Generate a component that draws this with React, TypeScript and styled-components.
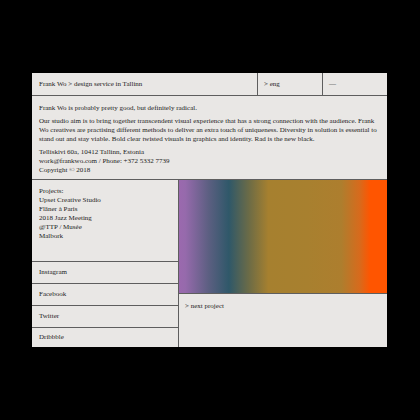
import React from "react";
import styled, { createGlobalStyle } from "styled-components";

const Global = createGlobalStyle`
  html, body { margin: 0; padding: 0; background: #000; }
  body { width: 420px; height: 420px; overflow: hidden; }
`;

const LINE = "#5e5e5e";

const Page = styled.div`
  width: 420px;
  height: 420px;
  background: #000;
  padding: 73px 0 0 32px;
  box-sizing: border-box;
`;

const Panel = styled.div`
  width: 355px;
  height: 274px;
  background: #e9e7e5;
  color: #222;
  font-family: "Liberation Serif", "Times New Roman", serif;
  font-size: 7px;
  line-height: 9px;
  display: flex;
  flex-direction: column;
`;

const Header = styled.div`
  display: grid;
  grid-template-columns: 225px 65px 65px;
  height: 23px;
  box-sizing: border-box;
  border-bottom: 1px solid ${LINE};
`;

const HeaderCell = styled.div<{ $divider?: boolean }>`
  display: flex;
  align-items: center;
  padding-left: ${(p) => (p.$divider ? "6px" : "7px")};
  box-sizing: border-box;
  border-left: ${(p) => (p.$divider ? `1px solid ${LINE}` : "none")};
`;

const Info = styled.div`
  height: 84px;
  box-sizing: border-box;
  border-bottom: 1px solid ${LINE};
  padding: 8px 8px 0 7px;
  display: flex;
  flex-direction: column;
  gap: 4px;
`;

const Para = styled.p`
  margin: 0;
`;

const Bottom = styled.div`
  flex: 1;
  display: grid;
  grid-template-columns: 146px 1fr;
  min-height: 0;
`;

const LeftCol = styled.div`
  display: flex;
  flex-direction: column;
`;

const Projects = styled.div`
  height: 81px;
  box-sizing: border-box;
  padding: 7px 7px 0 7px;
`;

const SocialRow = styled.div<{ $h: number }>`
  height: ${(p) => p.$h}px;
  box-sizing: border-box;
  border-top: 1px solid ${LINE};
  display: flex;
  align-items: center;
  padding-left: 7px;
`;

const RightCol = styled.div`
  display: flex;
  flex-direction: column;
  border-left: 1px solid ${LINE};
`;

const Gradient = styled.div`
  height: 113px;
  background: linear-gradient(
    90deg,
    #9b69ae 0%,
    #966aac 3%,
    #5d5f82 14%,
    #2f5869 24%,
    #6e6c45 34%,
    #a6802f 43%,
    #a8802f 62%,
    #ad7e2e 78%,
    #d86a1c 87%,
    #ff5500 92%,
    #ff5500 100%
  );
`;

const Next = styled.div`
  flex: 1;
  border-top: 1px solid ${LINE};
  padding: 8px 7px 0 6px;
`;

const socials: [string, number][] = [
  ["Instagram", 22],
  ["Facebook", 22],
  ["Twitter", 22],
  ["Dribbble", 20],
];

export default function App() {
  return (
    <Page>
      <Global />
      <Panel>
        <Header>
          <HeaderCell>Frank Wo &gt; design service in Tallinn</HeaderCell>
          <HeaderCell $divider>&gt; eng</HeaderCell>
          <HeaderCell $divider>—</HeaderCell>
        </Header>
        <Info>
          <Para>Frank Wo is probably pretty good, but definitely radical.</Para>
          <Para>
            Our studio aim is to bring together transcendent visual experience that has a strong connection with the audience. Frank
            Wo creatives are practising different methods to deliver an extra touch of uniqueness. Diversity in solution is essential
            to stand out and stay viable. Bold clear twisted visuals in graphics and identity. Rad is the new black.
          </Para>
          <Para>
            Telliskivi 60a, 10412 Tallinn, Estonia
            <br />
            work@frankwo.com / Phone: +372 5332 7739
            <br />
            Copyright © 2018
          </Para>
        </Info>
        <Bottom>
          <LeftCol>
            <Projects>
              Projects:
              <br />
              Upset Creative Studio
              <br />
              Flâner à Paris
              <br />
              2018 Jazz Meeting
              <br />
              @TTP / Musée
              <br />
              Malbork
            </Projects>
            {socials.map(([name, h]) => (
              <SocialRow key={name} $h={h}>
                {name}
              </SocialRow>
            ))}
          </LeftCol>
          <RightCol>
            <Gradient />
            <Next>&gt; next project</Next>
          </RightCol>
        </Bottom>
      </Panel>
    </Page>
  );
}
